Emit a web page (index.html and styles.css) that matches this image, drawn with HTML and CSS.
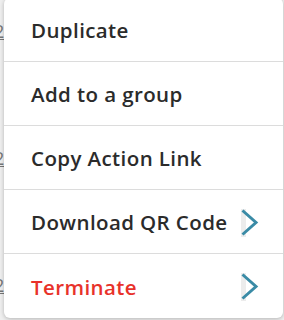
FILE: index.html
```html
<!DOCTYPE html>
<html lang="en">
<head>
    <meta charset="UTF-8">
    <meta name="viewport" content="width=device-width, initial-scale=1.0">
    <title>Action menu</title>
    <link rel="stylesheet" href="styles.css">
</head>
<body>
    <!-- Lista que queda detras del menu -->
    <div class="behind">
        <div class="behind-row"><span class="count">2</span></div>
        <div class="behind-row"><span class="count">2</span></div>
        <div class="behind-row"><span class="count">2</span></div>
    </div>

    <!-- Menu de acciones -->
    <ul class="menu">
        <li class="menu-item">Duplicate</li>
        <li class="menu-item">Add to a group</li>
        <li class="menu-item">Copy Action Link</li>
        <li class="menu-item has-sub">
            <span>Download QR Code</span>
            <span class="chevron">
                <svg width="18" height="28" viewBox="0 0 18 28">
                    <rect x="0" y="0" width="5" height="28" fill="#ececec"/>
                    <path d="M1.5 1.5 L15 13.5 L1.5 25.5" fill="none" stroke="#3a8ba6" stroke-width="3"/>
                </svg>
            </span>
        </li>
        <li class="menu-item has-sub danger">
            <span>Terminate</span>
            <span class="chevron">
                <svg width="18" height="28" viewBox="0 0 18 28">
                    <rect x="0" y="0" width="5" height="28" fill="#ececec"/>
                    <path d="M1.5 1.5 L15 13.5 L1.5 25.5" fill="none" stroke="#3a8ba6" stroke-width="3"/>
                </svg>
            </span>
        </li>
    </ul>
</body>
</html>
```

FILE: styles.css
```css
body {
    margin: 0;
    padding: 0;
    width: 284px;
    height: 320px;
    overflow: hidden;
    position: relative;
    background-color: #efefef;
    font-family: "Open Sans", Lato, sans-serif;
}
/*Lista de fondo*/
.behind {
    display: flex;
    flex-direction: column;
    padding-top: 19px;
}
.behind-row {
    height: 127px;
    margin-left: -6px;
    line-height: 24px;
}
.behind-row:last-child {
    height: 24px;
}
.count {
    font-size: 18px;
    color: #777;
    text-decoration: underline;
}
/*Menu flotante*/
.menu {
    position: absolute;
    top: -2px;
    left: 4px;
    right: 1px;
    margin: 0;
    padding: 0;
    list-style: none;
    background-color: #fff;
    border-radius: 6px;
    box-shadow: 0px 1px 4px rgba(0, 0, 0, 0.25);
}
.menu-item {
    display: flex;
    align-items: center;
    justify-content: space-between;
    height: 62px;
    padding: 1px 26px 0 27px;
    border-bottom: 1px solid #dcdcdc;
    font-size: 20.5px;
    letter-spacing: 0.4px;
    font-weight: 600;
    color: #2b2b2b;
}
.menu-item:last-child {
    border-bottom: none;
    height: 63px;
}
.has-sub {
    padding-right: 24px;
}
.chevron {
    display: flex;
    margin-top: 1px;
}
.danger {
    color: #e8322a;
}
```
